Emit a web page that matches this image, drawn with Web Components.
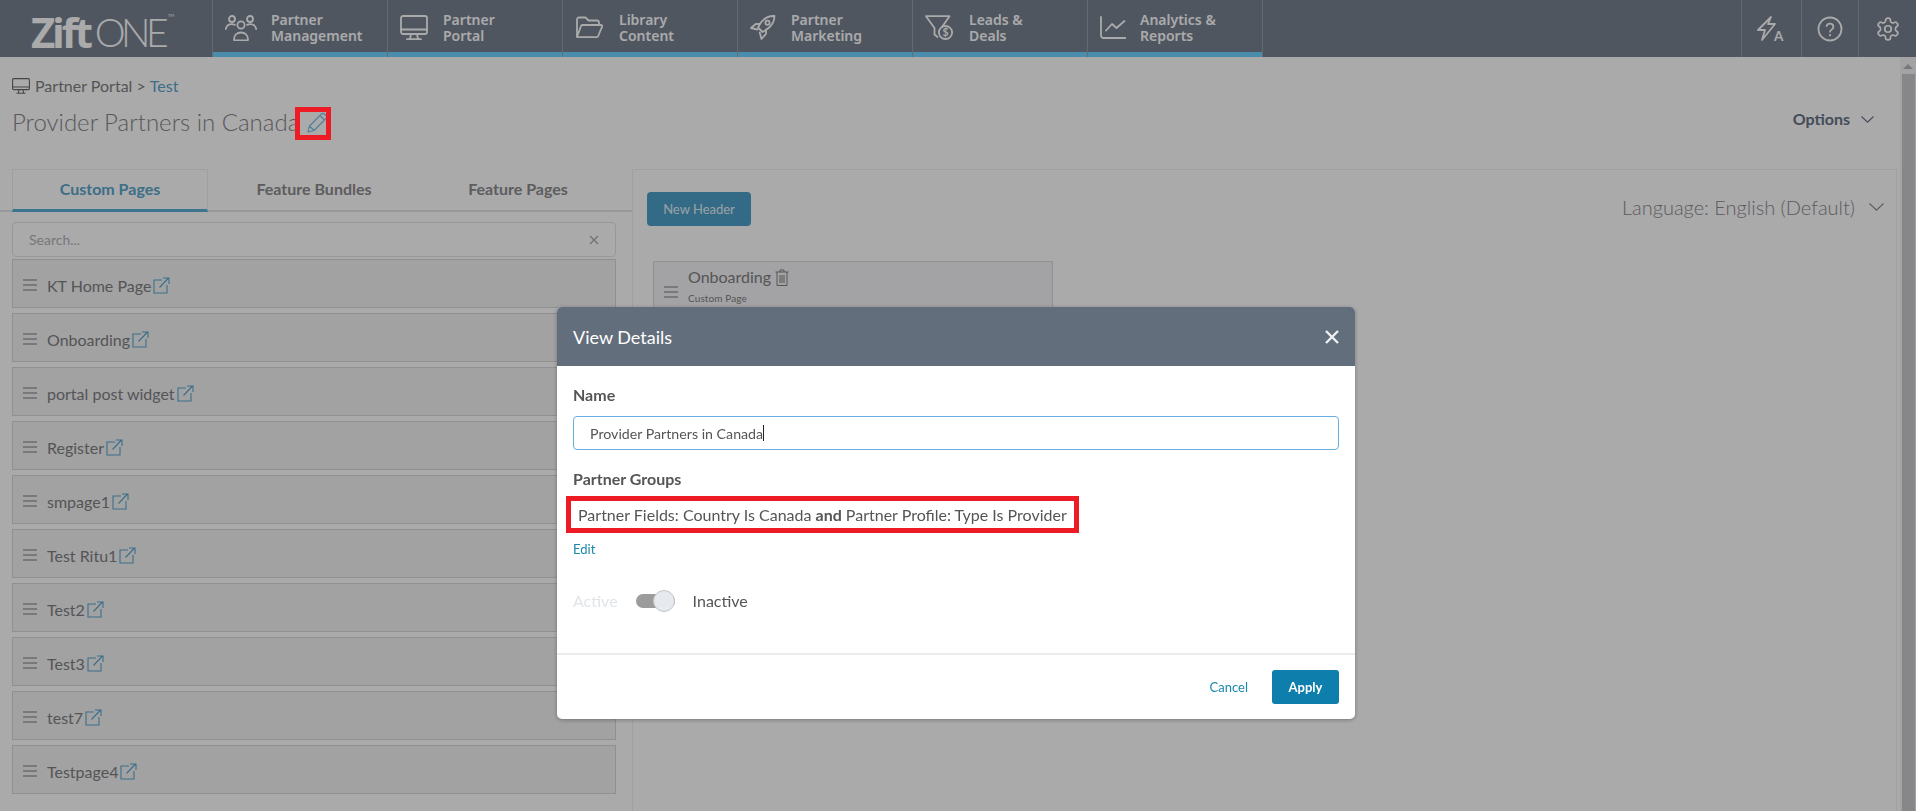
<!DOCTYPE html>
<html lang="en"><head><meta charset="utf-8"><title>Provider Partners in Canada</title>
<style>
html,body{margin:0;height:811px;overflow:hidden;background:#fff;font-family:Lato,"Liberation Sans",sans-serif}
</style></head>
<body>
<z-nav>
  <z-logo></z-logo>
  <z-nav-item icon="people" gap="14">Partner<br>Management</z-nav-item>
  <z-nav-item icon="monitor" gap="15">Partner<br>Portal</z-nav-item>
  <z-nav-item icon="folder" gap="16">Library<br>Content</z-nav-item>
  <z-nav-item icon="rocket" gap="15">Partner<br>Marketing</z-nav-item>
  <z-nav-item icon="funnel" gap="16">Leads &amp;<br>Deals</z-nav-item>
  <z-nav-item icon="chart" gap="14">Analytics &amp;<br>Reports</z-nav-item>
  <z-nav-tools></z-nav-tools>
</z-nav>
<z-main>
  <z-head></z-head>
  <z-panels>
    <z-left>
      <z-row>KT Home Page</z-row><z-row>Onboarding</z-row><z-row>portal post widget</z-row><z-row>Register</z-row><z-row>smpage1</z-row>
      <z-row>Test Ritu1</z-row><z-row>Test2</z-row><z-row>Test3</z-row><z-row>test7</z-row><z-row>Testpage4</z-row>
    </z-left>
    <z-right></z-right>
  </z-panels>
</z-main>
<z-backdrop>
  <z-mark style="left:295px;top:107px;width:36px;height:33px"></z-mark>
  <z-modal></z-modal>
</z-backdrop>
<script>
const ICONS={
people:[32,26,'<circle cx="7" cy="4" r="3"/><circle cx="25" cy="4" r="3"/><circle cx="16" cy="10" r="3.6"/><path d="M9 24.5c0-4.500 3-7 7-7s7 2.500 7 7c0 .6-.4 1-1 1H10c-.6 0-1-.4-1-1z"/><path d="M.8 14c.6-3 3-4.800 6-4.800 1 0 2 .2 3 .7"/><path d="M31.200 14c-.6-3-3-4.800-6-4.800-1 0-2 .2-3 .7"/>'],
monitor:[28,25,'<rect x="1" y="1" width="26" height="18" rx="2"/><path d="M1 14.500h26M11 19l-1 5M17 19l1 5M7 24.200h14"/>'],
folder:[28,23,'<path d="M2 20V3.500a2 2 0 0 1 2-2h6.500l3 3H22a2 2 0 0 1 2 2V9"/><path d="M2 21l4-11a1.500 1.500 0 0 1 1.400-1H26a1.200 1.200 0 0 1 1.100 1.700L23.200 20a1.500 1.500 0 0 1-1.400 1.100H3a1 1 0 0 1-1-1z"/>'],
rocket:[26,25,'<path d="M24.500 1c-6-.3-11 2.500-14.500 8l-2 3.500 4.500 4.500 3.500-2c5.500-3.500 8.500-8 8.500-14z"/><circle cx="17.500" cy="7.800" r="2.100"/><path d="M9.500 9H5.800L1 13l6.500 1.500M16 14.500v4.300L11.500 24l-1.800-6.500"/>'],
funnel:[28,25,'<path d="M1 1.200h23.500L17 12M1 1.200L9.500 13v6.500l3 2.500"/><circle cx="20.500" cy="17.500" r="6.600"/><text x="20.500" y="21.300" font-size="10.500" font-weight="700" font-family="Lato" text-anchor="middle" fill="currentColor" stroke="none">$</text>'],
chart:[26,23,'<path d="M1 1v18.500a2.500 2.500 0 0 0 2.500 2.500H25.500"/><path d="M6 14.500l6-6.500 4.500 4L24.500 5"/>']
};
const svg=(k,c='')=>{const [w,h,b]=ICONS[k];return `<svg class="${c}" width="${w}" height="${h}" viewBox="0 0 ${w} ${h}" fill="none" stroke="currentColor" stroke-width="1.800" stroke-linecap="round" stroke-linejoin="round">${b}</svg>`};
const EXT='<svg width="17" height="17" viewBox="0 0 17 17" fill="none" stroke="#5aa6cb" stroke-width="1.100"><path d="M9 3H1v13h13V8M6.500 10.500L15.500 1M10 1h6v6"/></svg>';
const CHEV=(w,h)=>`<svg width="${w}" height="${h}" viewBox="0 0 ${w} ${h}" fill="none" stroke="currentColor" stroke-width="1.100"><path d="M.5 .5L${w/2} ${h-.8}L${w-.5} .5"/></svg>`;
const BARS='<svg width="14" height="12" viewBox="0 0 14 12" fill="#b6b6b8"><rect width="14" height="2"/><rect y="5" width="14" height="2"/><rect y="10" width="14" height="2"/></svg>';
function def(name,css,html){
  customElements.define(name,class extends HTMLElement{
    constructor(){super();this.attachShadow({mode:'open'})}
    connectedCallback(){this.shadowRoot.innerHTML=`<style>${css}</style>`+(typeof html==='function'?html(this):html)}
  });
}
def('z-nav',':host{display:flex;height:57px;background:#78818f;font-family:"Noto Sans","Open Sans",sans-serif}','<slot></slot>');
def('z-logo',`:host{display:flex;width:212px;box-sizing:border-box;padding:9px 0 0 31px;color:#fff;align-items:flex-start;height:52px}
 .z{font:700 42px/46px "Open Sans",sans-serif;letter-spacing:-3.200px}
 .o{font:300 39px/46px Lato,sans-serif;letter-spacing:-4.600px;margin-left:5px}
 .t{font:400 4px/6px Lato;margin:4px 0 0 4px}`,'<span class="z">Zift</span><span class="o">ONE</span><span class="t">TM</span>');
def('z-nav-item',`:host{display:flex;width:175px;box-sizing:border-box;border-left:1px solid #95a0ad}
 .i{flex:1;display:flex;align-items:center;border-bottom:5px solid #6fd2ff;padding-left:12px;color:#fff;font:600 14px/16px "Noto Sans","Open Sans",sans-serif;height:52px}
 svg{flex:none;margin-top:3px}`,
 e=>`<div class="i">${svg(e.getAttribute('icon'))}<span style="margin-left:${e.getAttribute('gap')}px;margin-top:4px"><slot></slot></span></div>`);
def('z-nav-tools',`:host{display:flex;flex:1;justify-content:flex-end;border-left:1px solid #95a0ad;color:#fff}
 .c{height:57px;display:flex;align-items:center;justify-content:center;border-left:1px solid #95a0ad;box-sizing:border-box}
 b{font:700 13.500px/1 Lato;position:absolute;left:17px;top:14px}
 .b{position:relative;width:29px;height:25px}
 svg{display:block}`,
 `<div class="c" style="width:60px"><div class="b"><svg width="20" height="25" viewBox="0 0 20 25" fill="none" stroke="currentColor" stroke-width="1.800" stroke-linejoin="round"><path d="M14 1L1 14h7L5 24 18 8h-7z"/></svg><b>A</b></div></div>
  <div class="c" style="width:57px"><svg width="26" height="26" viewBox="0 0 26 26" fill="none" stroke="currentColor" stroke-width="1.800" stroke-linecap="round"><circle cx="13" cy="13" r="11.500"/><path d="M9.600 10a3.500 3.500 0 0 1 6.800 1.100c0 2.300-3.400 2.700-3.400 4.600"/><path d="M13 19v.2" stroke-width="2.200"/></svg></div>
  <div class="c" style="width:58px"><svg width="26" height="26" viewBox="0 0 24 24" fill="none" stroke="currentColor" stroke-width="1.600"><path d="M12.220 2h-.44a2 2 0 0 0-2 2v.18a2 2 0 0 1-1 1.730l-.43.25a2 2 0 0 1-2 0l-.15-.08a2 2 0 0 0-2.730.73l-.22.38a2 2 0 0 0 .73 2.730l.15.1a2 2 0 0 1 1 1.720v.51a2 2 0 0 1-1 1.740l-.15.09a2 2 0 0 0-.73 2.730l.22.38a2 2 0 0 0 2.730.73l.15-.08a2 2 0 0 1 2 0l.43.25a2 2 0 0 1 1 1.730V20a2 2 0 0 0 2 2h.44a2 2 0 0 0 2-2v-.18a2 2 0 0 1 1-1.730l.43-.25a2 2 0 0 1 2 0l.15.08a2 2 0 0 0 2.730-.73l.22-.39a2 2 0 0 0-.73-2.730l-.15-.08a2 2 0 0 1-1-1.740v-.5a2 2 0 0 1 1-1.740l.15-.09a2 2 0 0 0 .73-2.730l-.22-.38a2 2 0 0 0-2.730-.73l-.15.08a2 2 0 0 1-2 0l-.43-.25a2 2 0 0 1-1-1.730V4a2 2 0 0 0-2-2z"/><circle cx="12" cy="12" r="3"/></svg></div>`);
def('z-main',`:host{display:grid;grid-template-columns:1fr 16px;grid-template-rows:112px 1fr;height:754px}
 ::slotted(z-head){grid-column:1}
 ::slotted(z-panels){grid-column:1}
 .sb{grid-column:2;grid-row:1/3;background:#f5f5f6;display:flex;flex-direction:column;align-items:center}
 .up{width:0;height:0;border:5px solid transparent;border-top:0;border-bottom:5px solid #b4b4b6;margin:7px 0 5px}
 .th{width:13px;flex:1;background:#cbcbcd}`,'<slot></slot><div class="sb"><div class="up"></div><div class="th"></div></div>');
def('z-head',`:host{display:flex;justify-content:space-between;align-items:flex-start;padding:20px 26px 0 12px;box-sizing:border-box;color:#808080}
 .bc{display:flex;align-items:center;font:400 16px/18px Lato,sans-serif;height:18px}
 .bc svg{margin-right:5px}
 .bc a{color:#5aa6cb}
 h1{margin:10px 0 0;font:300 24px/34px Lato,sans-serif;color:#858585;display:flex;align-items:center}
 h1 svg{margin:0 0 0 8px}
 .op{margin-top:32px;display:flex;align-items:center;gap:11px;font:700 16px/20px Lato,sans-serif;color:#667285}`,
 `<div><div class="bc"><svg width="18" height="16" viewBox="0 0 18 16" fill="none" stroke="#6a6a6c" stroke-width="1.100"><rect x=".6" y=".6" width="16.800" height="11" rx="1"/><path d="M.6 9h16.800M7 11.600l-.6 3.400M11 11.600l.6 3.400M4.500 15.200h9"/></svg>Partner Portal&nbsp;&gt;&nbsp;<a>Test</a></div>
 <h1>Provider Partners in Canada<svg width="21" height="21" viewBox="0 0 21 21" fill="none" stroke="#77bfe6" stroke-width="1.100" stroke-linejoin="round"><path d="M1 20l1.500-6L14.500 2a2 2 0 0 1 2.900 0l1.600 1.600a2 2 0 0 1 0 2.900L7 18.500zM13 3.500L17.500 8M2.500 14L7 18.500"/></svg></h1></div>
 <div class="op">Options<span style="color:#667285;display:flex">${CHEV(13,7)}</span></div>`);
def('z-panels',':host{display:flex;min-height:0}','<slot></slot>');
def('z-left',`:host{display:block;width:632px;flex:none;box-sizing:border-box}
 .tabs{display:flex;gap:8px;padding-left:12px;height:43px;box-sizing:border-box;border-bottom:2px solid #e4e4e6;font:700 16px/40px Lato,sans-serif;color:#8c8c8c}
 .t{width:196px;text-align:center;height:43px;box-sizing:border-box}
 .a{color:#5aa6cb;border:1px solid #efeff0;border-bottom:3px solid #58aed4;line-height:38px}
 .s{margin:10px 16px 2px 12px;height:35px;box-sizing:border-box;border:1px solid #dfe6e8;border-radius:4px;display:flex;align-items:center;justify-content:space-between;padding:0 16px;font:400 14px Lato,sans-serif;color:#b4b4b4}
 .l{display:flex;flex-direction:column;gap:5px;margin:0 16px 0 12px}`,
 `<div class="tabs"><div class="t a">Custom Pages</div><div class="t">Feature Bundles</div><div class="t">Feature Pages</div></div>
 <div class="s"><span>Search...</span><svg width="10" height="10" viewBox="0 0 10 10" stroke="#a9a9a9" stroke-width="1.200"><path d="M1 1l8 8M9 1l-8 8"/></svg></div>
 <div class="l"><slot></slot></div>`);
def('z-row',`:host{display:flex;align-items:center;height:49px;box-sizing:border-box;background:#f3f3f4;border:1px solid #d8d8da;padding:3px 0 0 10px;font:400 16px Lato,sans-serif;color:#808080}
 .n{margin-left:10px;margin-right:2px}
 svg{flex:none}`,`${BARS}<span class="n"><slot></slot></span>${EXT}`);
def('z-right',`:host{display:block;flex:1;box-sizing:border-box;border:1px solid #f0f0f1;border-bottom:0;margin-right:3px;padding:21px 0 0 14px;color:#808080}
 .top{display:flex;justify-content:space-between;align-items:center;padding-right:12px;height:35px}
 button{width:104px;height:34px;border:0;border-radius:4px;background:#4da1c8;color:#e6f2f7;font:400 13px Lato,sans-serif;padding:0}
 .lang{display:flex;align-items:center;gap:14px;font:300 20px Lato,sans-serif;color:#8b8b8f;margin-top:-3px}
 .card{margin:35px 0 0 6px;width:400px;height:70px;box-sizing:border-box;border:1px solid #d8d8da;background:#f5f5f6;display:flex;padding:0 0 0 10px}
 .bars{margin-top:20px}
 .tx{margin-left:10px;padding-top:5px}
 .nm{display:flex;align-items:center;gap:4px;font:400 16px/20px Lato,sans-serif}
 .su{font:400 10px/12px Lato,sans-serif;margin-top:5px;letter-spacing:.1px}`,
 `<div class="top"><button>New Header</button><div class="lang">Language: English (Default)<span style="display:flex">${CHEV(15,8)}</span></div></div>
 <div class="card"><div class="bars">${BARS}</div><div class="tx"><div class="nm">Onboarding<svg width="14" height="17" viewBox="0 0 14 17" fill="none" stroke="#808080" stroke-width="1"><path d="M.5 3h13M5 3V1h4v2M2 3v13.500h10V3M5 6v8M7 6v8M9 6v8"/></svg></div><div class="su">Custom Page</div></div></div>`);
def('z-backdrop',':host{position:fixed;inset:0;background:rgba(0,0,3,.335)}','<slot></slot>');
def('z-mark',':host{position:absolute;box-sizing:border-box;border:5px solid #ed1c24}','');
def('z-modal',`:host{position:absolute;left:557px;top:307px;width:798px;height:412px;background:#fff;border-radius:5px;overflow:hidden;display:flex;flex-direction:column;box-shadow:0 1px 4px rgba(0,0,0,.3);font-family:Lato,sans-serif;color:#555}
 header{height:59px;background:#626e7c;color:#fff;display:flex;align-items:center;justify-content:space-between;padding:0 15px 0 16px;font:400 18px Lato,sans-serif;flex:none}
 .b{flex:1;padding:0 16px;border-bottom:2px solid #ececec}
 label{display:block;font:700 16px/18px Lato,sans-serif;color:#555}
 .in{height:34px;box-sizing:border-box;border:1px solid #66afe0;border-radius:4px;padding-left:16px;display:flex;align-items:center;font:400 14.200px Lato,sans-serif;color:#555;margin-top:12px}
 .car{display:inline-block;width:1px;height:16px;background:#222}
 .red{box-sizing:border-box;margin:8px 0 0 -7px;width:513px;height:37px;border:5px solid #ed1c24;display:flex;align-items:center;padding-left:7px;font:400 16px Lato,sans-serif;white-space:pre;color:#555}
 .red b{font-weight:700}
 a{color:#1a87ad;font:400 13px/16px Lato,sans-serif;display:block;margin-top:8px}
 .tg{display:flex;align-items:center;margin-top:33px;font:400 16px/22px Lato,sans-serif;color:#555}
 .tk{position:relative;width:39px;height:14px;background:#9c9c9c;border-radius:7px;margin:0 18px 0 18px}
 .kn{position:absolute;right:0;top:-4px;width:22px;height:22px;box-sizing:border-box;border-radius:50%;background:#e6eaee;border:1px solid #c2c6ca}
 footer{height:64px;flex:none;display:flex;align-items:center;justify-content:flex-end;padding:0 16px 0 0;gap:24px;font:400 13px Lato,sans-serif;color:#1a87ad}
 button{width:67px;height:34px;border:0;border-radius:3px;background:#0e7fac;color:#fff;font:700 13px Lato,sans-serif;padding:0}`,
 `<header><span>View Details</span><svg width="16" height="16" viewBox="0 0 16 16" stroke="#eef0f2" stroke-width="2.400"><path d="M2 2l12 12M14 2L2 14"/></svg></header>
 <div class="b"><label style="margin-top:20px">Name</label><div class="in">Provider Partners in Canada<span class="car"></span></div>
 <label style="margin-top:20px">Partner Groups</label>
 <div class="red">Partner Fields: Country Is Canada <b>and</b> Partner Profile: Type Is Provider</div>
 <a>Edit</a>
 <div class="tg"><span style="color:#dfe6ea">Active</span><div class="tk"><div class="kn"></div></div><span>Inactive</span></div></div>
 <footer><span>Cancel</span><button>Apply</button></footer>`);
</script>
</body></html>
